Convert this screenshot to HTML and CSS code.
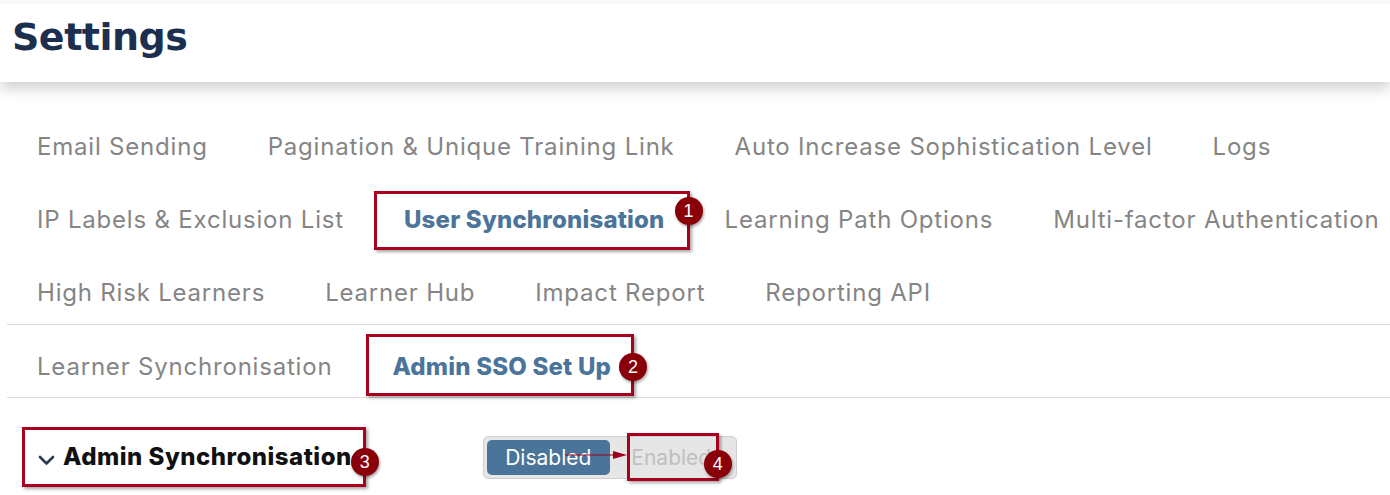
FILE: index.html
```html
<!DOCTYPE html>
<html lang="en">
<head>
    <meta charset="UTF-8">
    <title>Settings</title>
    <link rel="stylesheet" href="styles.css">
</head>
<body>

    <header class="page-header">
        <h1>Settings</h1>
    </header>

    <div class="tabs">
        <div class="tab-row">
            <a class="tab">Email Sending</a>
            <a class="tab">Pagination &amp; Unique Training Link</a>
            <a class="tab">Auto Increase Sophistication Level</a>
            <a class="tab">Logs</a>
        </div>
        <div class="tab-row">
            <a class="tab">IP Labels &amp; Exclusion List</a>
            <a class="tab active">User Synchronisation
                <span class="callout callout-tab"><span class="badge">1</span></span>
            </a>
            <a class="tab">Learning Path Options</a>
            <a class="tab">Multi-factor Authentication</a>
        </div>
        <div class="tab-row">
            <a class="tab">High Risk Learners</a>
            <a class="tab">Learner Hub</a>
            <a class="tab">Impact Report</a>
            <a class="tab">Reporting API</a>
        </div>
    </div>

    <div class="tabs sub-tabs">
        <div class="tab-row">
            <a class="tab">Learner Synchronisation</a>
            <a class="tab active">Admin SSO Set Up
                <span class="callout callout-sub"><span class="badge">2</span></span>
            </a>
        </div>
    </div>

    <section class="sync-row">
        <div class="section-title">
            <svg class="chevron" width="17" height="11" viewBox="0 0 17 11">
                <path d="M2 2 L8.5 8.5 L15 2" fill="none" stroke="#2b3a55" stroke-width="2.6" stroke-linecap="round" stroke-linejoin="round"/>
            </svg>
            <span>Admin Synchronisation</span>
            <span class="callout callout-title"><span class="badge">3</span></span>
        </div>

        <div class="toggle">
            <button class="toggle-opt selected">Disabled</button>
            <button class="toggle-opt">Enabled
                <span class="callout callout-toggle"><span class="badge">4</span></span>
            </button>
            <svg class="arrow" width="64" height="10" viewBox="0 0 64 10">
                <line x1="0" y1="5" x2="52" y2="5" stroke="#a0001c" stroke-width="1.2"/>
                <path d="M48 1 L62 5 L48 9 Z" fill="#a0001c"/>
            </svg>
        </div>
    </section>

</body>
</html>
```

FILE: styles.css
```css
body {
    margin: 0;
    font-family: 'Inter', 'DejaVu Sans', sans-serif;
    background-color: #fff;
    color: #333;
}

.page-header {
    height: 82px;
    background-color: #fff;
    border-top: 4px solid #f8f8f8;
    box-sizing: border-box;
    box-shadow: 0 6px 14px rgba(0, 0, 0, 0.2);
    position: relative;
}

.page-header h1 {
    margin: 0;
    padding: 11px 0 0 12px;
    font-family: 'DejaVu Sans', sans-serif;
    font-size: 38px;
    font-weight: bold;
    letter-spacing: -0.5px;
    color: #1c2f4f;
}

.tabs {
    margin: 23px 0 0 7px;
    border-bottom: 1px solid #dcdcdc;
}

.sub-tabs {
    margin-top: 0;
}

.sub-tabs .tab-row {
    height: 72px;
}

.tab-row {
    display: flex;
    align-items: center;
    gap: 60px;
    height: 73px;
    padding: 11px 0 0 30px;
    box-sizing: border-box;
}

.tab {
    position: relative;
    font-size: 24px;
    line-height: 30px;
    letter-spacing: 0.8px;
    color: #858585;
    white-space: nowrap;
    cursor: pointer;
}

.tab.active {
    font-weight: 800;
    letter-spacing: 0.2px;
    color: #4a7499;
}

.callout {
    position: absolute;
    border: 3px solid #a8001f;
    box-shadow: 2px 2px 3px rgba(0, 0, 0, 0.35);
    pointer-events: none;
}

.badge {
    position: absolute;
    right: -16px;
    width: 28px;
    height: 28px;
    border-radius: 50%;
    background-color: #8a0009;
    color: #fff;
    font-family: 'Liberation Sans', sans-serif;
    font-size: 18px;
    font-weight: normal;
    letter-spacing: 0;
    line-height: 28px;
    text-align: center;
    box-shadow: 1px 2px 3px rgba(0, 0, 0, 0.35);
}

.callout-tab {
    left: -30px;
    right: -25px;
    top: -14px;
    bottom: -15px;
}

.callout-tab .badge {
    top: 3px;
}

.callout-sub {
    left: -26px;
    right: -23px;
    top: -18px;
    bottom: -14px;
}

.callout-sub .badge {
    top: 16px;
}

.sync-row {
    display: flex;
    align-items: center;
    height: 98px;
    padding: 20px 0 0 38px;
    box-sizing: border-box;
}

.section-title {
    position: relative;
    display: flex;
    align-items: center;
    gap: 8px;
    font-size: 24px;
    line-height: 30px;
    letter-spacing: 0.5px;
    font-weight: 800;
    color: #111;
}

.chevron {
    margin-top: 6px;
}

.callout-title {
    left: -16px;
    right: -14px;
    top: -15px;
    bottom: -15px;
}

.callout-title .badge {
    top: 18px;
}

.toggle {
    position: relative;
    display: flex;
    margin-left: 131px;
    padding: 3px;
    background-color: #e6e6e6;
    border: 1px solid #cfcfcf;
    border-radius: 5px;
}

.toggle-opt {
    position: relative;
    width: 123px;
    height: 35px;
    border: none;
    border-radius: 5px;
    background: transparent;
    font-family: 'Inter', 'DejaVu Sans', sans-serif;
    font-size: 21px;
    color: #c0c0c0;
    padding: 0;
}

.toggle-opt.selected {
    background-color: #4a7499;
    color: #fff;
}

.callout-toggle {
    left: 17px;
    right: 14px;
    top: -7px;
    bottom: -6px;
}

.callout-toggle .badge {
    top: 14px;
}

.arrow {
    position: absolute;
    left: 81px;
    top: 13px;
}
```
